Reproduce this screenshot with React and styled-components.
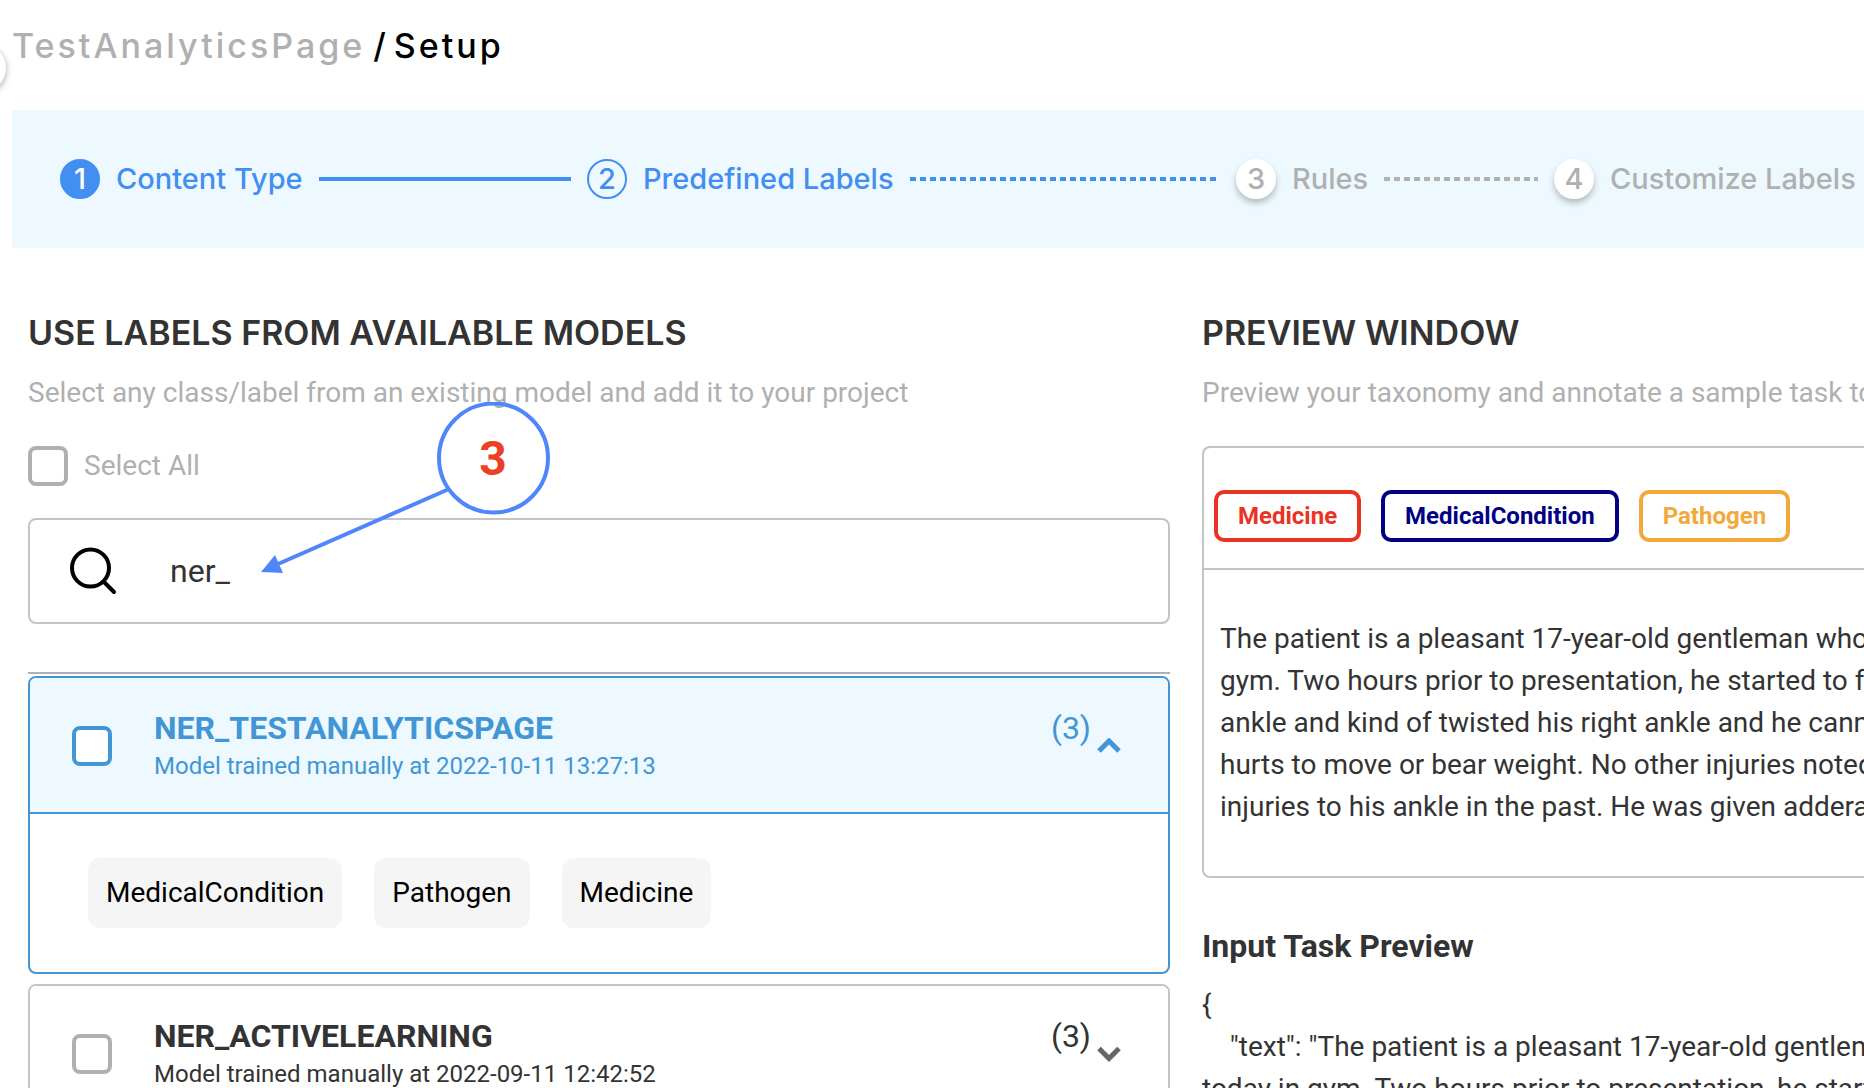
import React, { useState } from "react";
import styled, { createGlobalStyle } from "styled-components";

const GlobalStyle = createGlobalStyle`
  * { box-sizing: border-box; }
  body {
    margin: 0;
    background: #fff;
    color: #333;
    font-family: Roboto, "Liberation Sans", sans-serif;
    font-size: 28px;
    line-height: 42px;
  }
  h1, h2, h3, p, ol, ul, pre { margin: 0; padding: 0; font: inherit; }
  ol, ul { list-style: none; }
  button { font: inherit; border: 0; padding: 0; background: none; cursor: pointer; }
`;

const displayFont = `Inter, "Open Sans", sans-serif`;

const Page = styled.div`
  position: relative;
  height: 100vh;
  overflow: hidden;
`;

const DrawerToggle = styled.button`
  position: absolute;
  top: 44px;
  left: -42px;
  width: 48px;
  height: 48px;
  border-radius: 50%;
  background: #fff;
  box-shadow: 0 2px 6px rgba(0, 0, 0, 0.35);
`;

const Header = styled.header`
  height: 110px;
  padding: 24px 0 0 12px;
`;

const Breadcrumb = styled.h1`
  display: flex;
  gap: 8px;
  font-family: ${displayFont};
  font-size: 34px;
  font-weight: 500;
  line-height: 44px;
  letter-spacing: 3px;
  color: #000;
`;

const ProjectLink = styled.a`
  color: #b0b0b0;
  text-decoration: none;
`;

const Slash = styled.span`
  letter-spacing: 0;
`;

const Steps = styled.ol`
  display: grid;
  grid-template-columns: 527fr 649fr 318fr 310fr;
  align-items: center;
  height: 138px;
  margin-left: 12px;
  padding-left: 48px;
  background: #edf9fe;
`;

const Step = styled.li`
  display: flex;
  align-items: center;
  gap: 16px;
  padding-right: 16px;
  min-width: 0;
  font-family: ${displayFont};
  font-size: 29px;
  font-weight: 500;
  line-height: 40px;
  white-space: nowrap;
  color: ${(p) => (p.$state === "todo" ? "#b0b0b0" : "#428ff1")};
  &:last-child { padding-right: 0; }
`;

const Bullet = styled.span`
  flex: none;
  display: flex;
  align-items: center;
  justify-content: center;
  width: 40px;
  height: 40px;
  border-radius: 50%;
  color: ${(p) => (p.$state === "done" ? "#fff" : "inherit")};
  background: ${(p) => ({ done: "#428ff1", current: "transparent", todo: "#fff" })[p.$state]};
  border: 2px solid ${(p) => (p.$state === "todo" ? "#fff" : "#428ff1")};
  box-shadow: ${(p) => (p.$state === "todo" ? "0 4px 6px rgba(0, 0, 0, 0.25)" : "none")};
`;

const Connector = styled.span`
  flex: 1;
  height: 4px;
  background: ${(p) =>
    p.$state === "done"
      ? "currentColor"
      : "repeating-linear-gradient(90deg, currentColor 0 6px, transparent 6px 10px)"};
`;

const Columns = styled.main`
  display: grid;
  grid-template-columns: minmax(0, 1142fr) minmax(0, 662fr);
  gap: 32px;
  padding: 65px 0 0 28px;
`;

const SectionTitle = styled.h2`
  margin-bottom: 19px;
  font-family: ${displayFont};
  font-size: 34px;
  font-weight: 600;
  line-height: 40px;
  white-space: nowrap;
`;

const Hint = styled.p`
  margin-bottom: 32px;
  color: #b0b0b0;
  white-space: nowrap;
`;

const Checkbox = styled.input.attrs({ type: "checkbox" })`
  appearance: none;
  flex: none;
  width: 40px;
  height: 40px;
  margin: 0;
  border: 4px solid ${(p) => (p.$active ? "#4296d6" : "#b0b0b0")};
  border-radius: 8px;
  background: #fff;
  &:checked { background: currentColor; }
`;

const SelectAll = styled.label`
  display: flex;
  align-items: center;
  gap: 16px;
  height: 40px;
  margin-bottom: 32px;
  color: #b0b0b0;
`;

const SearchBox = styled.label`
  display: flex;
  align-items: center;
  gap: 52px;
  height: 106px;
  margin-bottom: 48px;
  padding: 0 40px;
  border: 2px solid #c4c4c4;
  border-radius: 8px;
`;

const SearchInput = styled.input`
  flex: 1;
  min-width: 0;
  padding: 0;
  border: 0;
  outline: 0;
  background: transparent;
  font: inherit;
  font-size: 32px;
  color: #333;
`;

const ModelList = styled.ul`
  display: flex;
  flex-direction: column;
  gap: 10px;
  padding-top: 2px;
  border-top: 2px solid #b0b0b0;
`;

const ModelCard = styled.li`
  overflow: hidden;
  border: 2px solid ${(p) => (p.$open ? "#4296d6" : "#c4c4c4")};
  border-radius: 8px;
`;

const ModelHeader = styled.div`
  display: flex;
  align-items: center;
  padding: 30px 43px 28px 42px;
  color: ${(p) => (p.$open ? "#4296d6" : "#333")};
  background: ${(p) => (p.$open ? "#edf9fe" : "#fff")};
`;

const ModelLabel = styled.label`
  flex: 1;
  padding-left: 42px;
`;

const ModelName = styled.span`
  display: block;
  font-size: 32px;
  font-weight: 700;
  line-height: 40px;
`;

const ModelMeta = styled.span`
  display: block;
  font-size: 24px;
  line-height: 36px;
`;

const ModelCount = styled.span`
  align-self: flex-start;
  margin-right: 2px;
  font-size: 32px;
  line-height: 40px;
`;

const ExpandButton = styled.button`
  display: flex;
  justify-content: center;
  width: 32px;
  color: ${(p) => (p.$open ? "#4296d6" : "#666")};
`;

const Chips = styled.div`
  display: flex;
  gap: 32px;
  padding: 44px 58px;
  border-top: 2px solid #4296d6;
`;

const Chip = styled.button`
  height: 70px;
  padding: 0 18px;
  border-radius: 12px;
  background: #f5f5f5;
  color: #000;
`;

const Preview = styled.section`
  overflow: hidden;
`;

const PreviewBox = styled.div`
  border: 2px solid #c4c4c4;
  border-right: 0;
  border-radius: 8px 0 0 8px;
`;

const TagBar = styled.div`
  display: flex;
  gap: 20px;
  padding: 42px 10px 26px;
  border-bottom: 2px solid #c4c4c4;
`;

const Tag = styled.button`
  height: 52px;
  padding: 0 20px;
  border: 4px solid ${(p) => p.$color};
  border-radius: 10px;
  color: ${(p) => p.$color};
  font-size: 24px;
  font-weight: 700;
  line-height: 44px;
`;

const SampleText = styled.p`
  padding: 48px 0 48px 16px;
  white-space: pre;
`;

const TaskTitle = styled.h3`
  margin: 48px 0 18px;
  font-size: 32px;
  font-weight: 700;
  line-height: 40px;
`;

const TaskJson = styled.pre`
  white-space: pre;
`;

const Callout = styled.div`
  position: absolute;
  top: 402px;
  left: 260px;
  width: 292px;
  height: 174px;
  pointer-events: none;
`;

const CalloutNumber = styled.span`
  position: absolute;
  top: 0;
  right: 2px;
  width: 114px;
  text-align: center;
  font-size: 48px;
  font-weight: 700;
  line-height: 114px;
  color: #ec3f26;
`;

const steps = [
  { label: "Content Type", state: "done" },
  { label: "Predefined Labels", state: "current" },
  { label: "Rules", state: "todo" },
  { label: "Customize Labels", state: "todo" },
];

const models = [
  { name: "NER_TESTANALYTICSPAGE", date: "2022-10-11 13:27:13", labels: ["MedicalCondition", "Pathogen", "Medicine"] },
  { name: "NER_ACTIVELEARNING", date: "2022-09-11 12:42:52", labels: ["MedicalCondition", "Pathogen", "Medicine"] },
];

const tags = [
  { label: "Medicine", color: "#eb3324" },
  { label: "MedicalCondition", color: "#000083" },
  { label: "Pathogen", color: "#f2a93b" },
];

const sampleLines = [
  "The patient is a pleasant 17-year-old gentleman who",
  "gym. Two hours prior to presentation, he started to feel",
  "ankle and kind of twisted his right ankle and he cannot",
  "hurts to move or bear weight. No other injuries noted.",
  "injuries to his ankle in the past. He was given adderall",
];

const taskLines = [
  "{",
  '    "text": "The patient is a pleasant 17-year-old gentleman',
  "today in gym. Two hours prior to presentation, he started",
];

function SearchIcon() {
  return (
    <svg width="48" height="48" viewBox="0 0 48 48" fill="none" stroke="#000" strokeWidth="4" strokeLinecap="round" aria-hidden="true">
      <circle cx="20.5" cy="21" r="18.5" />
      <path d="M33.5 34.5 44 45" />
    </svg>
  );
}

function Chevron({ up }) {
  return (
    <svg width="24" height="16" viewBox="0 0 24 16" fill="none" stroke="currentColor" strokeWidth="5" aria-hidden="true">
      <path d={up ? "M2 13 12 3 22 13" : "M2 2.5 12 12.5 22 2.5"} />
    </svg>
  );
}

function Model({ id, model, initiallyOpen }) {
  const [open, setOpen] = useState(initiallyOpen);
  return (
    <ModelCard $open={open}>
      <ModelHeader $open={open}>
        <Checkbox id={id} $active={open} />
        <ModelLabel htmlFor={id}>
          <ModelName>{model.name}</ModelName>
          <ModelMeta>Model trained manually at {model.date}</ModelMeta>
        </ModelLabel>
        <ModelCount>({model.labels.length})</ModelCount>
        <ExpandButton $open={open} aria-expanded={open} aria-label={model.name} onClick={() => setOpen(!open)}>
          <Chevron up={open} />
        </ExpandButton>
      </ModelHeader>
      {open && (
        <Chips>
          {model.labels.map((label) => (
            <Chip key={label}>{label}</Chip>
          ))}
        </Chips>
      )}
    </ModelCard>
  );
}

export default function App() {
  const [query, setQuery] = useState("ner_");
  return (
    <Page>
      <GlobalStyle />
      <DrawerToggle aria-label="Menu" />
      <Header>
        <Breadcrumb>
          <ProjectLink href="#project">TestAnalyticsPage</ProjectLink>
          <Slash>/</Slash>
          <span>Setup</span>
        </Breadcrumb>
      </Header>
      <Steps>
        {steps.map((step, i) => (
          <Step key={step.label} $state={step.state}>
            <Bullet $state={step.state}>{i + 1}</Bullet>
            <span>{step.label}</span>
            {i < steps.length - 1 && <Connector $state={step.state} />}
          </Step>
        ))}
      </Steps>
      <Columns>
        <section>
          <SectionTitle>USE LABELS FROM AVAILABLE MODELS</SectionTitle>
          <Hint>Select any class/label from an existing model and add it to your project</Hint>
          <SelectAll>
            <Checkbox />
            Select All
          </SelectAll>
          <SearchBox>
            <SearchIcon />
            <SearchInput type="text" aria-label="Search" value={query} onChange={(e) => setQuery(e.target.value)} />
          </SearchBox>
          <ModelList>
            {models.map((model, i) => (
              <Model key={model.name} id={`model-${i}`} model={model} initiallyOpen={i === 0} />
            ))}
          </ModelList>
        </section>
        <Preview>
          <SectionTitle>PREVIEW WINDOW</SectionTitle>
          <Hint>Preview your taxonomy and annotate a sample task to</Hint>
          <PreviewBox>
            <TagBar>
              {tags.map((tag) => (
                <Tag key={tag.label} $color={tag.color}>{tag.label}</Tag>
              ))}
            </TagBar>
            <SampleText>{sampleLines.join("\n")}</SampleText>
          </PreviewBox>
          <TaskTitle>Input Task Preview</TaskTitle>
          <TaskJson>{taskLines.join("\n")}</TaskJson>
        </Preview>
      </Columns>
      <Callout>
        <svg width="292" height="174" viewBox="0 0 292 174" fill="none" aria-hidden="true">
          <circle cx="233.5" cy="56" r="54.5" stroke="#4f87fb" strokeWidth="4" />
          <path d="M189 87 18 162" stroke="#4f87fb" strokeWidth="4" />
          <path d="M1 170 15 153 23 171Z" fill="#4f87fb" />
        </svg>
        <CalloutNumber>3</CalloutNumber>
      </Callout>
    </Page>
  );
}
